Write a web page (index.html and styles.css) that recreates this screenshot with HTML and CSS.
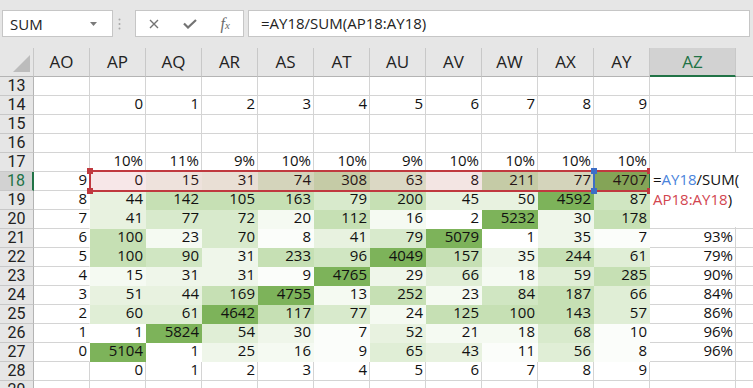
FILE: index.html
```html
<!DOCTYPE html>
<html lang="en">
<head>
    <meta charset="UTF-8">
    <meta name="viewport" content="width=device-width, initial-scale=1.0">
    <title>Hoja1</title>
    <link rel="stylesheet" href="styles.css">
</head>
<body>
    <!-- Barra de fórmulas -->
    <div class="toolbar">
        <div class="name-box">
            <span>SUM</span>
            <svg width="7" height="4" viewBox="0 0 7 4"><polygon points="0,0 7,0 3.5,4" fill="#7a7a7a"/></svg>
        </div>
        <div class="grip">
            <svg width="3" height="12" viewBox="0 0 3 12"><circle cx="1.5" cy="1.5" r="1" fill="#a8a8a8"/><circle cx="1.5" cy="6" r="1" fill="#a8a8a8"/><circle cx="1.5" cy="10.5" r="1" fill="#a8a8a8"/></svg>
        </div>
        <div class="fx-box">
            <span class="btn">
                <svg width="10" height="10" viewBox="0 0 10 10"><path d="M1 1 L9 9 M9 1 L1 9" stroke="#737373" stroke-width="1.4" fill="none"/></svg>
            </span>
            <span class="btn">
                <svg width="14" height="10" viewBox="0 0 14 10"><polyline points="1,4.5 5,8.5 13,1" stroke="#737373" stroke-width="2.2" fill="none"/></svg>
            </span>
            <span class="btn fx"><i>f<small>x</small></i></span>
        </div>
        <div class="formula">=AY18/SUM(AP18:AY18)</div>
    </div>

    <!-- Hoja -->
    <div class="sheet">
        <div class="grid">
            <div class="corner"><svg width="33" height="28" viewBox="0 0 33 28"><polygon points="30,7 30,24 13,24" fill="#bcbcbc"/></svg></div>
            <div class="col">AO</div><div class="col">AP</div><div class="col">AQ</div><div class="col">AR</div><div class="col">AS</div><div class="col">AT</div><div class="col">AU</div><div class="col">AV</div><div class="col">AW</div><div class="col">AX</div><div class="col">AY</div><div class="col sel">AZ</div><div class="col"></div>

            <div class="row">13</div>
            <div class="c"></div><div class="c"></div><div class="c"></div><div class="c"></div><div class="c"></div><div class="c"></div><div class="c"></div><div class="c"></div><div class="c"></div><div class="c"></div><div class="c"></div><div class="c"></div><div class="c"></div>

            <div class="row">14</div>
            <div class="c"></div><div class="c">0</div><div class="c">1</div><div class="c">2</div><div class="c">3</div><div class="c">4</div><div class="c">5</div><div class="c">6</div><div class="c">7</div><div class="c">8</div><div class="c">9</div><div class="c"></div><div class="c"></div>

            <div class="row">15</div>
            <div class="c"></div><div class="c"></div><div class="c"></div><div class="c"></div><div class="c"></div><div class="c"></div><div class="c"></div><div class="c"></div><div class="c"></div><div class="c"></div><div class="c"></div><div class="c"></div><div class="c"></div>

            <div class="row">16</div>
            <div class="c"></div><div class="c"></div><div class="c"></div><div class="c"></div><div class="c"></div><div class="c"></div><div class="c"></div><div class="c"></div><div class="c"></div><div class="c"></div><div class="c"></div><div class="c"></div><div class="c"></div>

            <div class="row">17</div>
            <div class="c"></div><div class="c">10%</div><div class="c">11%</div><div class="c">9%</div><div class="c">10%</div><div class="c">10%</div><div class="c">9%</div><div class="c">10%</div><div class="c">10%</div><div class="c">10%</div><div class="c">10%</div><div class="c"></div><div class="c"></div>

            <div class="row sel">18</div>
            <div class="c nr">9</div><div class="c g0">0</div><div class="c g2">15</div><div class="c g3">31</div><div class="c g6">74</div><div class="c g8">308</div><div class="c g5">63</div><div class="c g1">8</div><div class="c g8">211</div><div class="c g6">77</div><div class="c g9">4707</div><div class="c"></div><div class="c"></div>

            <div class="row">19</div>
            <div class="c nr">8</div><div class="c g4">44</div><div class="c g8">142</div><div class="c g8">105</div><div class="c g8">163</div><div class="c g6">79</div><div class="c g8">200</div><div class="c g4">45</div><div class="c g4">50</div><div class="c g9">4592</div><div class="c g7">87</div><div class="c"></div><div class="c"></div>

            <div class="row">20</div>
            <div class="c nr">7</div><div class="c g4">41</div><div class="c g6">77</div><div class="c g6">72</div><div class="c g2">20</div><div class="c g8">112</div><div class="c g2">16</div><div class="c g0">2</div><div class="c g9">5232</div><div class="c g3">30</div><div class="c g8">178</div><div class="c"></div><div class="c"></div>

            <div class="row">21</div>
            <div class="c nr">6</div><div class="c g8">100</div><div class="c g2">23</div><div class="c g6">70</div><div class="c g1">8</div><div class="c g4">41</div><div class="c g6">79</div><div class="c g9">5079</div><div class="c g0">1</div><div class="c g3">35</div><div class="c g1">7</div><div class="c">93%</div><div class="c"></div>

            <div class="row">22</div>
            <div class="c nr">5</div><div class="c g8">100</div><div class="c g7">90</div><div class="c g3">31</div><div class="c g8">233</div><div class="c g7">96</div><div class="c g9">4049</div><div class="c g8">157</div><div class="c g3">35</div><div class="c g8">244</div><div class="c g5">61</div><div class="c">79%</div><div class="c"></div>

            <div class="row">23</div>
            <div class="c nr">4</div><div class="c g2">15</div><div class="c g3">31</div><div class="c g3">31</div><div class="c g1">9</div><div class="c g9">4765</div><div class="c g3">29</div><div class="c g5">66</div><div class="c g2">18</div><div class="c g5">59</div><div class="c g8">285</div><div class="c">90%</div><div class="c"></div>

            <div class="row">24</div>
            <div class="c nr">3</div><div class="c g4">51</div><div class="c g4">44</div><div class="c g8">169</div><div class="c g9">4755</div><div class="c g2">13</div><div class="c g8">252</div><div class="c g2">23</div><div class="c g7">84</div><div class="c g8">187</div><div class="c g5">66</div><div class="c">84%</div><div class="c"></div>

            <div class="row">25</div>
            <div class="c nr">2</div><div class="c g5">60</div><div class="c g5">61</div><div class="c g9">4642</div><div class="c g8">117</div><div class="c g6">77</div><div class="c g2">24</div><div class="c g8">125</div><div class="c g8">100</div><div class="c g8">143</div><div class="c g5">57</div><div class="c">86%</div><div class="c"></div>

            <div class="row">26</div>
            <div class="c nr">1</div><div class="c g0">1</div><div class="c g9">5824</div><div class="c g5">54</div><div class="c g3">30</div><div class="c g1">7</div><div class="c g4">52</div><div class="c g2">21</div><div class="c g2">18</div><div class="c g6">68</div><div class="c g1">10</div><div class="c">96%</div><div class="c"></div>

            <div class="row">27</div>
            <div class="c nr">0</div><div class="c g9">5104</div><div class="c g0">1</div><div class="c g3">25</div><div class="c g2">16</div><div class="c g1">9</div><div class="c g5">65</div><div class="c g4">43</div><div class="c g1">11</div><div class="c g5">56</div><div class="c g1">8</div><div class="c">96%</div><div class="c"></div>

            <div class="row">28</div>
            <div class="c"></div><div class="c">0</div><div class="c">1</div><div class="c">2</div><div class="c">3</div><div class="c">4</div><div class="c">5</div><div class="c">6</div><div class="c">7</div><div class="c">8</div><div class="c">9</div><div class="c"></div><div class="c"></div>

            <div class="row">29</div>
            <div class="c"></div><div class="c"></div><div class="c"></div><div class="c"></div><div class="c"></div><div class="c"></div><div class="c"></div><div class="c"></div><div class="c"></div><div class="c"></div><div class="c"></div><div class="c"></div><div class="c"></div>
        </div>

        <!-- Rangos de la fórmula en edición -->
        <div class="ref-red">
            <span class="handle tl"></span><span class="handle tr"></span>
            <span class="handle bl"></span><span class="handle br"></span>
        </div>
        <div class="ref-blue">
            <span class="handle top"></span><span class="handle bottom"></span>
        </div>
        <div class="active-edge"></div>

        <div class="edit-box">
            =<span class="t-blue">AY18</span>/SUM(<br>
            <span class="t-red">AP18:AY18</span>)
        </div>
    </div>
</body>
</html>
```

FILE: styles.css
```css
/* Estilos generales */
body {
    margin: 0;
    width: 753px;
    height: 388px;
    overflow: hidden;
    background-color: #fff;
    font-family: "Open Sans", "Liberation Sans", sans-serif;
    color: #222;
}

/* Barra de fórmulas */
.toolbar {
    height: 48px;
    box-sizing: border-box;
    padding: 10px 3px 0 2px;
    background-color: #e6e6e6;
    display: flex;
    align-items: flex-start;
}

.name-box {
    width: 111px;
    height: 27px;
    box-sizing: border-box;
    border: 1px solid #c6c6c6;
    background-color: #fff;
    display: flex;
    align-items: center;
    justify-content: space-between;
    padding: 0 15px 0 7px;
    font-size: 15px;
}

.grip {
    width: 22px;
    box-sizing: border-box;
    padding: 8px 0 0 5px;
}

.grip svg {
    display: block;
}

.fx-box {
    width: 109px;
    height: 27px;
    box-sizing: border-box;
    border: 1px solid #c6c6c6;
    background-color: #fff;
    display: flex;
}

.fx-box .btn {
    width: 36px;
    height: 25px;
    display: flex;
    align-items: center;
    justify-content: center;
}

.fx-box .fx {
    font-family: "Liberation Serif", serif;
    font-size: 16px;
    color: #6a6a6a;
}

.fx-box .fx small {
    font-size: 11px;
}

.formula {
    flex: 1;
    margin-left: 4px;
    height: 27px;
    box-sizing: border-box;
    border: 1px solid #c6c6c6;
    background-color: #fff;
    padding-left: 12px;
    font-size: 15px;
    line-height: 25px;
}

/* Hoja */
.sheet {
    position: relative;
}

.grid {
    display: grid;
    grid-template-columns: 34px repeat(11, 56px) 86px 56px;
    grid-template-rows: 29px repeat(17, 19px);
}

.corner,
.col {
    background-color: #e6e6e6;
    border-right: 1px solid #c8c8c8;
    border-bottom: 1px solid #b4b4b4;
    box-sizing: border-box;
}

.corner svg {
    display: block;
}

.col {
    text-align: center;
    font-size: 17px;
    line-height: 28px;
}

.col.sel {
    background-color: #d2d2d2;
    color: #217346;
    border-bottom: 2px solid #217346;
}

.row {
    background-color: #e6e6e6;
    border-right: 1px solid #b4b4b4;
    border-bottom: 1px solid #c8c8c8;
    box-sizing: border-box;
    text-align: center;
    font-family: Roboto, "Open Sans", sans-serif;
    font-size: 16px;
    line-height: 17px;
    overflow: hidden;
}

.row.sel {
    background-color: #d2d2d2;
    color: #217346;
    border-right: 2px solid #217346;
}

.c {
    border-right: 1px solid #d4d4d4;
    border-bottom: 1px solid #d4d4d4;
    box-sizing: border-box;
    padding-right: 2px;
    text-align: right;
    font-size: 15px;
    line-height: 14px;
    white-space: nowrap;
    color: #111;
}

.c.nr {
    border-right-color: transparent;
}

/* Escala de color (formato condicional) */
.g0 { background-color: #ffffff; border-color: #ffffff; }
.g1 { background-color: #fbfdfa; border-color: #fbfdfa; }
.g2 { background-color: #f5faf2; border-color: #f5faf2; }
.g3 { background-color: #eff6ea; border-color: #eff6ea; }
.g4 { background-color: #e8f2e0; border-color: #e8f2e0; }
.g5 { background-color: #e0eed6; border-color: #e0eed6; }
.g6 { background-color: #d8eacc; border-color: #d8eacc; }
.g7 { background-color: #d0e6c2; border-color: #d0e6c2; }
.g8 { background-color: #c6e0b4; border-color: #c6e0b4; }
.g9 { background-color: #7db35a; border-color: #7db35a; }

/* Rangos referenciados */
.ref-red {
    position: absolute;
    left: 89px;
    top: 122px;
    width: 562px;
    height: 22px;
    box-sizing: border-box;
    border: 2px solid #c0393f;
    background-color: rgba(192, 57, 67, 0.12);
}

.ref-red .handle {
    position: absolute;
    width: 6px;
    height: 6px;
    background-color: #c0393f;
}

.ref-red .tl { left: -4px; top: -4px; }
.ref-red .tr { right: -4px; top: -4px; }
.ref-red .bl { left: -4px; bottom: -4px; }
.ref-red .br { right: -4px; bottom: -4px; }

.ref-blue {
    position: absolute;
    left: 593px;
    top: 122px;
    width: 2px;
    height: 22px;
    background-color: #3d6fc6;
}

.ref-blue .handle {
    position: absolute;
    left: -2px;
    width: 6px;
    height: 6px;
    background-color: #3d6fc6;
}

.ref-blue .top { top: -2px; }
.ref-blue .bottom { bottom: -2px; }

.active-edge {
    position: absolute;
    left: 649px;
    top: 126px;
    width: 2px;
    height: 14px;
    background-color: #217346;
}

/* Celda en edición */
.edit-box {
    position: absolute;
    left: 650px;
    top: 105px;
    width: 103px;
    height: 74px;
    box-sizing: border-box;
    padding: 16px 0 0 3px;
    background-color: #fff;
    font-size: 15px;
    line-height: 20px;
    color: #111;
    white-space: nowrap;
}

.t-blue {
    color: #4a84dc;
}

.t-red {
    color: #d2454f;
}
```
